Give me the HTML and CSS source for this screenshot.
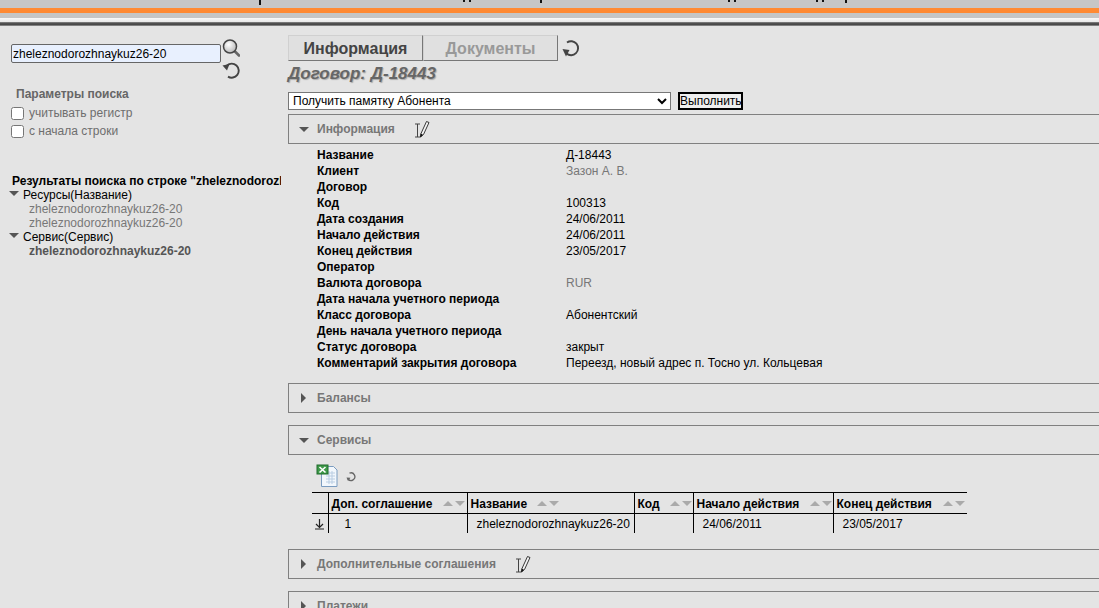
FILE: index.html
```html
<!DOCTYPE html>
<html lang="en">
<head>
    <meta charset="UTF-8">
    <title>Договор: Д-18443</title>
    <link rel="stylesheet" href="styles.css">
</head>
<body>
    <svg class="defs" width="0" height="0">
        <defs>
            <symbol id="edit" viewBox="0 0 16 18">
                <path d="M1 4h5M1 17h5M3.5 4v13" fill="none" stroke="#444" stroke-width="1"/>
                <path d="M7 13.5 L12.5 1.5 L15 2.5 L9.5 14.5 L6.5 17 Z" fill="#f4f4f4" stroke="#222" stroke-width="0.9"/>
                <path d="M6.3 17.5 L6.6 13.5 L9 14.8 Z" fill="#111"/>
            </symbol>
        </defs>
    </svg>

    <!-- Header -->
    <div class="header">
        <div class="header-cut"><i></i><i></i><i></i><i></i><i></i><i></i><i></i><i></i><i></i></div>
        <div class="header-orange"></div>
        <div class="header-gray"></div>
        <div class="header-white"></div>
        <div class="header-dark"></div>
    </div>

    <div class="container">
        <!-- Search -->
        <div class="sidebar">
            <div class="search-row">
                <input class="search-input" type="text" value="zheleznodorozhnaykuz26-20">
                <div class="search-icons">
                    <svg width="18" height="18" viewBox="0 0 18 18">
                        <defs>
                            <radialGradient id="ball" cx="0.4" cy="0.35" r="0.7">
                                <stop offset="0" stop-color="#fff"/>
                                <stop offset="1" stop-color="#b5b5b5"/>
                            </radialGradient>
                        </defs>
                        <path d="M13 12.5 L17 16.5" stroke="#666" stroke-width="2.6" stroke-linecap="round"/>
                        <circle cx="8" cy="7.5" r="6.5" fill="url(#ball)" stroke="#444" stroke-width="1.5"/>
                    </svg>
                    <svg class="undo" width="18" height="18" viewBox="0 0 18 18">
                        <path d="M5 4.5 A7 7 0 1 1 6 15.6" fill="none" stroke="#444" stroke-width="1.9"/>
                        <path d="M0.5 4.5 L7.5 3 L5 9.5 Z" fill="#444"/>
                    </svg>
                </div>
            </div>
            <div class="params-title">Параметры поиска</div>
            <label class="check"><input type="checkbox"> учитывать регистр</label>
            <label class="check"><input type="checkbox"> с начала строки</label>

            <div class="results-title">Результаты поиска по строке "zheleznodorozhnaykuz26-20"</div>
            <div class="tree-node"><span class="arrow-down"></span>Ресурсы(Название)</div>
            <div class="tree-leaf">zheleznodorozhnaykuz26-20</div>
            <div class="tree-leaf">zheleznodorozhnaykuz26-20</div>
            <div class="tree-node"><span class="arrow-down"></span>Сервис(Сервис)</div>
            <div class="tree-leaf active">zheleznodorozhnaykuz26-20</div>
        </div>

        <!-- Main -->
        <div class="main">
            <div class="tabs">
                <div class="tab active">Информация</div>
                <div class="tab">Документы</div>
                <svg class="tab-refresh" width="18" height="19" viewBox="0 0 18 19">
                    <path d="M5 3.5 A7 7 0 1 1 4.5 14.5" fill="none" stroke="#444" stroke-width="1.9"/>
                    <path d="M0.5 10 L7.5 11 L4 17.5 Z" fill="#444"/>
                </svg>
            </div>
            <h2 class="contract-title">Договор: Д-18443</h2>
            <div class="action-row">
                <select class="action-select"><option>Получить памятку Абонента</option></select>
                <button class="action-btn">Выполнить</button>
            </div>

            <div class="panel first">
                <span class="arrow-down"></span><span class="panel-title">Информация</span>
                <svg class="edit-icon" width="16" height="18"><use href="#edit"/></svg>
            </div>
            <div class="info">
                <div class="k">Название</div><div>Д-18443</div>
                <div class="k">Клиент</div><div class="muted">Зазон А. В.</div>
                <div class="k">Договор</div><div></div>
                <div class="k">Код</div><div>100313</div>
                <div class="k">Дата создания</div><div>24/06/2011</div>
                <div class="k">Начало действия</div><div>24/06/2011</div>
                <div class="k">Конец действия</div><div>23/05/2017</div>
                <div class="k">Оператор</div><div></div>
                <div class="k">Валюта договора</div><div class="muted">RUR</div>
                <div class="k">Дата начала учетного периода</div><div></div>
                <div class="k">Класс договора</div><div>Абонентский</div>
                <div class="k">День начала учетного периода</div><div></div>
                <div class="k">Статус договора</div><div>закрыт</div>
                <div class="k">Комментарий закрытия договора</div><div>Переезд, новый адрес п. Тосно ул. Кольцевая</div>
            </div>

            <div class="panel">
                <span class="arrow-right"></span><span class="panel-title">Балансы</span>
            </div>
            <div class="panel">
                <span class="arrow-down"></span><span class="panel-title">Сервисы</span>
            </div>
            <div class="services">
                <div class="services-tools">
                    <svg width="24" height="24" viewBox="0 0 24 24">
                        <path d="M5.5 2.5h12l3.5 3.5v16.5h-15.5z" fill="#f2f7fc" stroke="#7b9cc0"/>
                        <path d="M10 9h9M10 12h9M10 15h9M10 18h9M13 7v13M16 7v13" stroke="#b9cde2" stroke-width="1"/>
                        <rect x="1" y="1" width="11" height="9" fill="#3f9a4a" stroke="#1f6b2a"/>
                        <path d="M3.5 3 L9.5 8.5 M9.5 3 L3.5 8.5" stroke="#fff" stroke-width="1.6"/>
                    </svg>
                    <svg class="small-refresh" width="11" height="11" viewBox="0 0 11 11">
                        <path d="M3.5 2.2 A3.8 3.8 0 1 1 2 8" fill="none" stroke="#666" stroke-width="1.3"/>
                        <path d="M0.5 6.5 L4.5 6.8 L2 10 Z" fill="#666"/>
                    </svg>
                </div>
                <table class="grid">
                    <colgroup>
                        <col class="c0"><col class="c1"><col class="c2"><col class="c3"><col class="c4"><col class="c5">
                    </colgroup>
                    <thead>
                        <tr>
                            <th></th>
                            <th>Доп. соглашение<span class="sort s1"><b></b><u></u></span></th>
                            <th>Название<span class="sort s2"><b></b><u></u></span></th>
                            <th>Код<span class="sort s3"><b></b><u></u></span></th>
                            <th>Начало действия<span class="sort s4"><b></b><u></u></span></th>
                            <th>Конец действия<span class="sort s5"><b></b><u></u></span></th>
                        </tr>
                    </thead>
                    <tbody>
                        <tr>
                            <td class="row-mark">
                                <svg width="11" height="12" viewBox="0 0 11 12"><path d="M5.5 1v8M2 6l3.5 3.5L9 6M1 11h9" fill="none" stroke="#222" stroke-width="1.2"/></svg>
                            </td>
                            <td class="num">1</td>
                            <td class="name">zheleznodorozhnaykuz26-20</td>
                            <td></td>
                            <td class="date">24/06/2011</td>
                            <td class="date">23/05/2017</td>
                        </tr>
                    </tbody>
                </table>
            </div>
            <div class="panel">
                <span class="arrow-right"></span><span class="panel-title">Дополнительные соглашения</span>
                <svg class="edit-icon" width="16" height="18"><use href="#edit"/></svg>
            </div>
            <div class="panel">
                <span class="arrow-right"></span><span class="panel-title">Платежи</span>
            </div>
        </div>
    </div>
</body>
</html>
```

FILE: styles.css
```css
html, body {
    height: 608px;
    overflow: hidden;
}
body {
    margin: 0;
    font-family: "Liberation Sans", Arial, sans-serif;
    font-size: 12px;
    color: #000;
    background-color: #e4e4e4;
}
.defs {
    display: block;
    height: 0;
}

/* header */
.header-cut {
    height: 8px;
    background-color: #c6c6c6;
    display: flex;
    align-items: flex-start;
}
.header-cut i {
    display: block;
    width: 2px;
    height: 2px;
    background-color: #111;
    margin-left: 4px;
}
.header-cut i:nth-child(1) { margin-left: 259px; height: 5px; }
.header-cut i:nth-child(2) { margin-left: 202px; }
.header-cut i:nth-child(4) { margin-left: 69px; height: 3px; }
.header-cut i:nth-child(5) { margin-left: 186px; }
.header-cut i:nth-child(7) { margin-left: 80px; }
.header-cut i:nth-child(9) { margin-left: 21px; height: 3px; }
.header-orange {
    height: 5px;
    background-color: #ff8a33;
}
.header-gray {
    height: 5px;
    background-color: #c6c6c6;
}
.header-white {
    height: 4px;
    background: linear-gradient(#fafafa, #e8e8e8);
}
.header-dark {
    height: 4px;
    background: linear-gradient(#8a8a8a, #3d3d3d 50%, #555, #aaa);
}

.container {
    display: flex;
}

/* left column */
.sidebar {
    width: 281px;
    flex: none;
    overflow: hidden;
    padding-left: 11px;
    box-sizing: border-box;
    white-space: nowrap;
    margin-right: 7px;
}
.search-row {
    display: flex;
    margin-top: 13px;
    height: 40px;
}
.search-input {
    width: 210px;
    height: 19px;
    margin: 5px 0 0;
    padding: 0 1px;
    box-sizing: border-box;
    font-family: inherit;
    font-size: 12px;
    background-color: #e8f0fe;
    border: 1px solid #666;
    border-radius: 2px;
}
.search-icons {
    display: flex;
    flex-direction: column;
    margin-left: 1px;
}
.undo {
    margin-top: 4px;
}
.params-title {
    margin: 8px 0 0 5px;
    font-weight: bold;
    color: #666;
    line-height: 14px;
}
.check {
    display: flex;
    align-items: center;
    color: #6e6e6e;
    line-height: 18px;
    gap: 5px;
}
.check:first-of-type {
    margin-top: 3px;
}
.check input {
    margin: 0;
    width: 13px;
    height: 13px;
}
.results-title {
    margin-top: 34px;
    padding-left: 1px;
    font-weight: bold;
    line-height: 14px;
}
.tree-node {
    line-height: 14px;
    display: flex;
    align-items: center;
    margin-left: -2px;
}
.tree-node .arrow-down {
    margin: 0 4px 3px 0;
}
.tree-leaf {
    line-height: 14px;
    margin-left: 18px;
    color: #777;
}
.tree-leaf.active {
    font-weight: bold;
    color: #555;
}

/* arrows */
.arrow-down {
    display: inline-block;
    width: 0;
    height: 0;
    border-left: 5px solid transparent;
    border-right: 5px solid transparent;
    border-top: 5px solid #555;
}
.arrow-right {
    display: inline-block;
    width: 0;
    height: 0;
    border-top: 5px solid transparent;
    border-bottom: 5px solid transparent;
    border-left: 5px solid #555;
}

/* main column */
.main {
    flex: 1;
    min-width: 0;
}
.tabs {
    display: flex;
    align-items: center;
    margin-top: 9px;
}
.tab {
    width: 135px;
    height: 26px;
    box-sizing: border-box;
    border: 1px solid #d0d0d0;
    border-right-color: #777;
    border-bottom-color: #777;
    background-color: #e0e0e0;
    color: #999;
    font-size: 16px;
    font-weight: bold;
    line-height: 25px;
    text-align: center;
}
.tab.active {
    color: #444;
}
.tab-refresh {
    margin-left: 4px;
}
.contract-title {
    margin: 3px 0 0;
    font-size: 17px;
    line-height: 19px;
    font-weight: bold;
    font-style: italic;
    color: #666;
    text-shadow: 1px 1px 1px #aaa;
}
.action-row {
    display: flex;
    margin-top: 9px;
}
.action-select {
    width: 383px;
    height: 18px;
    padding: 0;
    font-family: inherit;
    font-size: 12px;
    background-color: #fff;
    border: 1px solid #777;
    border-radius: 0;
}
.action-btn {
    margin-left: 7px;
    width: 65px;
    height: 18px;
    padding: 0;
    font-family: inherit;
    font-size: 12px;
    background-color: #efefef;
    border: 2px solid #000;
    border-radius: 0;
}
.panel {
    display: flex;
    align-items: center;
    height: 30px;
    box-sizing: border-box;
    margin: 12px -10px 0 0;
    padding-left: 10px;
    border: 1px solid #808080;
}
.panel.first {
    margin-top: 4px;
}
.panel-title {
    margin-left: 8px;
    font-weight: bold;
    color: #777;
}
.panel .arrow-right {
    margin-left: 2px;
    margin-right: 3px;
}
.edit-icon {
    margin-left: 19px;
}
.info {
    display: grid;
    grid-template-columns: 249px 1fr;
    grid-auto-rows: 16px;
    margin: 3px 0 0 29px;
    line-height: 16px;
}
.k {
    font-weight: bold;
}
.muted {
    color: #777;
}

/* services grid */
.services {
    padding: 0 0 4px 24px;
}
.services-tools {
    display: flex;
    align-items: center;
    height: 26px;
    margin-top: 8px;
    padding-left: 4px;
    gap: 6px;
}
.grid {
    width: 655px;
    margin-top: 3px;
    table-layout: fixed;
    border-collapse: collapse;
}
.c0 { width: 16px; }
.c1 { width: 139px; }
.c2 { width: 167px; }
.c3 { width: 59px; }
.c4 { width: 140px; }
.c5 { width: 134px; }
.grid th {
    height: 21px;
    padding: 1px 0 0 3px;
    box-sizing: border-box;
    text-align: left;
    font-size: 12px;
    white-space: nowrap;
    border-top: 1px solid #000;
    border-bottom: 1px solid #000;
    border-left: 1px solid #000;
    overflow: hidden;
}
.grid th:first-child {
    border-left: none;
}
.grid td {
    height: 19px;
    padding: 0;
    border-left: 1px solid #000;
    white-space: nowrap;
    overflow: hidden;
}
.grid td:first-child {
    border-left: none;
}
.row-mark {
    text-align: center;
    vertical-align: bottom;
}
.num {
    padding-left: 16px !important;
}
.name {
    padding-left: 9px !important;
}
.date {
    padding-left: 9px !important;
}
.sort {
    display: inline-flex;
    gap: 2px;
    vertical-align: 2px;
}
.s1 { margin-left: 11px; }
.s2 { margin-left: 10px; }
.s3 { margin-left: 10px; }
.s4 { margin-left: 11px; }
.s5 { margin-left: 11px; }
.sort b {
    width: 0;
    height: 0;
    border-left: 5px solid transparent;
    border-right: 5px solid transparent;
    border-bottom: 5px solid #aaa;
}
.sort u {
    width: 0;
    height: 0;
    border-left: 5px solid transparent;
    border-right: 5px solid transparent;
    border-top: 5px solid #aaa;
}
```
